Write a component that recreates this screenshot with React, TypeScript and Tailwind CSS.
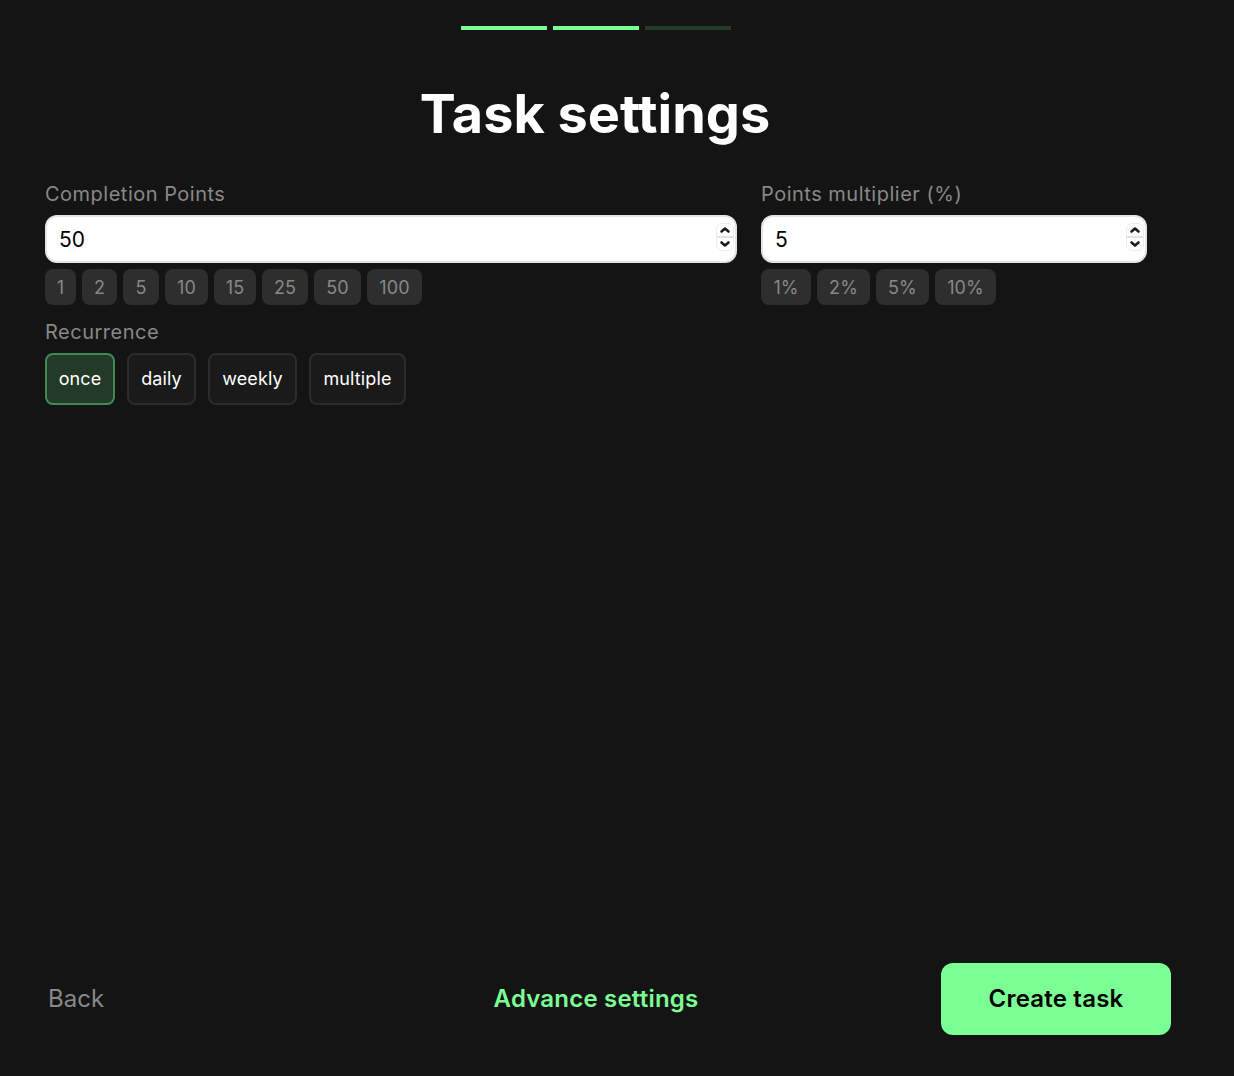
const inter = "font-['Inter',sans-serif]";

function Spinner() {
  return (
    <div className="absolute top-[8px] right-[3px] flex h-[28px] w-[18px] flex-col rounded-[6px] border border-[#ececec] bg-white">
      <div className="flex flex-1 items-center justify-center border-b-2 border-[#e2e2e2]">
        <svg width="12" height="8" viewBox="0 0 12 8" fill="none">
          <path d="M2.5 5.5L6 2.5l3.5 3" stroke="#1c1c1c" strokeWidth="2.6" strokeLinecap="round" strokeLinejoin="round" />
        </svg>
      </div>
      <div className="flex flex-1 items-center justify-center">
        <svg width="12" height="8" viewBox="0 0 12 8" fill="none">
          <path d="M2.5 2.5L6 5.5l3.5-3" stroke="#1c1c1c" strokeWidth="2.6" strokeLinecap="round" strokeLinejoin="round" />
        </svg>
      </div>
    </div>
  );
}

type Chip = { text: string; width: string };

function NumberField({ label, value, chips, width }: { label: string; value: string; chips: Chip[]; width: string }) {
  return (
    <div className={`flex flex-col ${width}`}>
      <label className="h-[30px] text-[20px] leading-[30px] tracking-[0.5px] text-[#888888]">{label}</label>
      <div className="relative mt-[6px]">
        <input
          readOnly
          value={value}
          className="h-[48px] w-full rounded-[12px] border-2 border-[#e4e4e4] bg-white px-[12px] text-[21px] text-black outline-none"
        />
        <Spinner />
      </div>
      <div className="mt-[6px] flex gap-[6px]">
        {chips.map((c) => (
          <button key={c.text} className={`h-[36px] rounded-[8px] bg-[#2e2e2e] text-[18px] tracking-[0.12px] text-[#888888] ${c.width}`}>
            {c.text}
          </button>
        ))}
      </div>
    </div>
  );
}

const pointChips: Chip[] = [
  { text: "1", width: "w-[31px]" },
  { text: "2", width: "w-[35px]" },
  { text: "5", width: "w-[36px]" },
  { text: "10", width: "w-[43px]" },
  { text: "15", width: "w-[42px]" },
  { text: "25", width: "w-[46px]" },
  { text: "50", width: "w-[47px]" },
  { text: "100", width: "w-[55px]" },
];

const percentChips: Chip[] = [
  { text: "1%", width: "w-[50px]" },
  { text: "2%", width: "w-[53px]" },
  { text: "5%", width: "w-[53px]" },
  { text: "10%", width: "w-[61px]" },
];

const recurrence: Chip[] = [
  { text: "once", width: "w-[70px]" },
  { text: "daily", width: "w-[69px]" },
  { text: "weekly", width: "w-[89px]" },
  { text: "multiple", width: "w-[97px]" },
];

export default function App() {
  return (
    <div className={`flex h-[1076px] w-[1234px] flex-col overflow-hidden bg-[#141414] ${inter}`}>
      <div className="flex w-[1192px] justify-center gap-[6px] pt-[26px]">
        <div className="h-[4px] w-[86px] bg-[#7bff95]" />
        <div className="h-[4px] w-[86px] bg-[#7bff95]" />
        <div className="h-[4px] w-[86px] bg-[#243c2a]" />
      </div>

      <h1 className="mt-[48px] w-[1190px] text-center text-[54px] leading-[72px] font-bold text-white">Task settings</h1>

      <div className="mt-[29px] flex gap-[24px] pl-[45px]">
        <NumberField label="Completion Points" value="50" chips={pointChips} width="w-[692px]" />
        <NumberField label="Points multiplier (%)" value="5" chips={percentChips} width="w-[386px]" />
      </div>

      <div className="mt-[12px] pl-[45px]">
        <div className="h-[30px] text-[20px] leading-[30px] tracking-[0.5px] text-[#888888]">Recurrence</div>
        <div className="mt-[6px] flex gap-[12px]">
          {recurrence.map((r) => (
            <button
              key={r.text}
              className={`h-[52px] rounded-[8px] border-2 pb-[2px] text-[18px] tracking-[0.12px] text-white ${r.width} ${
                r.text === "once" ? "border-[#3f8a53] bg-[#233a29]" : "border-[#2c2c2c] bg-[#1a1a1a]"
              }`}
            >
              {r.text}
            </button>
          ))}
        </div>
      </div>

      <div className="mt-auto mb-[41px] grid w-[1171px] grid-cols-3 items-center pl-[21px]">
        <button className="ml-[27px] justify-self-start text-[24px] text-[#888888]">Back</button>
        <button className="justify-self-center text-[24px] font-semibold tracking-[0.2px] text-[#7bff95]">Advance settings</button>
        <button className="h-[72px] w-[230px] justify-self-end rounded-[12px] bg-[#7bff95] text-[24px] font-semibold tracking-[0.2px] text-black">Create task</button>
      </div>
    </div>
  );
}
